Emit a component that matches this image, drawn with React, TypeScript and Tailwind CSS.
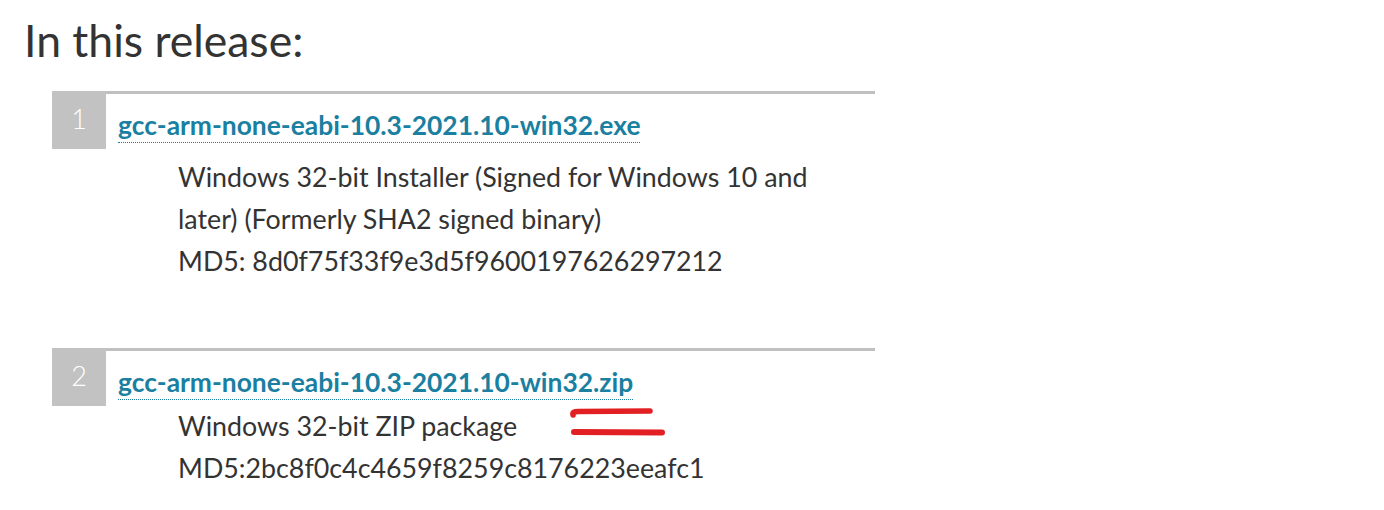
import React from "react";

// Download entries shown in the release list
const files = [
  {
    name: "gcc-arm-none-eabi-10.3-2021.10-win32.exe",
    lines: [
      "Windows 32-bit Installer (Signed for Windows 10 and",
      "later) (Formerly SHA2 signed binary)",
      "MD5: 8d0f75f33f9e3d5f9600197626297212",
    ],
    descGap: "mt-[13px]",
  },
  {
    name: "gcc-arm-none-eabi-10.3-2021.10-win32.zip",
    lines: ["Windows 32-bit ZIP package", "MD5:2bc8f0c4c4659f8259c8176223eeafc1"],
    descGap: "mt-[5px]",
    marked: true,
  },
];

function ReleaseItem({
  index,
  file,
}: {
  index: number;
  file: (typeof files)[number];
}) {
  return (
    <li className="relative flex w-[823px]">
      <div className="h-[58px] w-[54px] shrink-0 bg-[#c1c2c1] pt-[14px] text-center text-[27px] font-light leading-[28px] text-white">
        {index}
      </div>
      <div className="flex-1 border-t-[3px] border-[#c0c0c0] pl-[12px]">
        <div className="pt-[13px] text-[26.4px] font-bold leading-[36px]">
          <a
            href="#"
            className="border-b border-dotted border-[#1a7fa0] pb-[1px] text-[#1a7fa0]"
          >
            {file.name}
          </a>
        </div>
        <div
          className={`${file.descGap} pl-[60px] text-[26.8px] leading-[42px] text-[#333]`}
        >
          {file.lines.map((line) => (
            <div key={line} className="whitespace-nowrap">
              {line}
            </div>
          ))}
        </div>
      </div>

      {/* hand-drawn red marks next to the zip entry */}
      {file.marked && (
        <svg
          className="pointer-events-none absolute left-[516px] top-[55px]"
          width="100"
          height="34"
          viewBox="0 0 100 34"
        >
          <path
            d="M5 12 Q4 8.5 10 8.5 L82 8"
            stroke="#e21f22"
            strokeWidth="5.5"
            strokeLinecap="round"
            fill="none"
          />
          <path
            d="M6 29 L94 29.5"
            stroke="#e21f22"
            strokeWidth="6"
            strokeLinecap="round"
            fill="none"
          />
        </svg>
      )}
    </li>
  );
}

export default function App() {
  return (
    <div className="min-h-[510px] bg-white font-['Lato',sans-serif]">
      <h1 className="pl-6 pt-[10px] text-[44.5px] font-normal leading-[60px] text-[#333]">
        In this release:
      </h1>
      <ol className="ml-[52px] mt-[21px] flex flex-col gap-[66px]">
        {files.map((f, i) => (
          <ReleaseItem key={f.name} index={i + 1} file={f} />
        ))}
      </ol>
    </div>
  );
}
